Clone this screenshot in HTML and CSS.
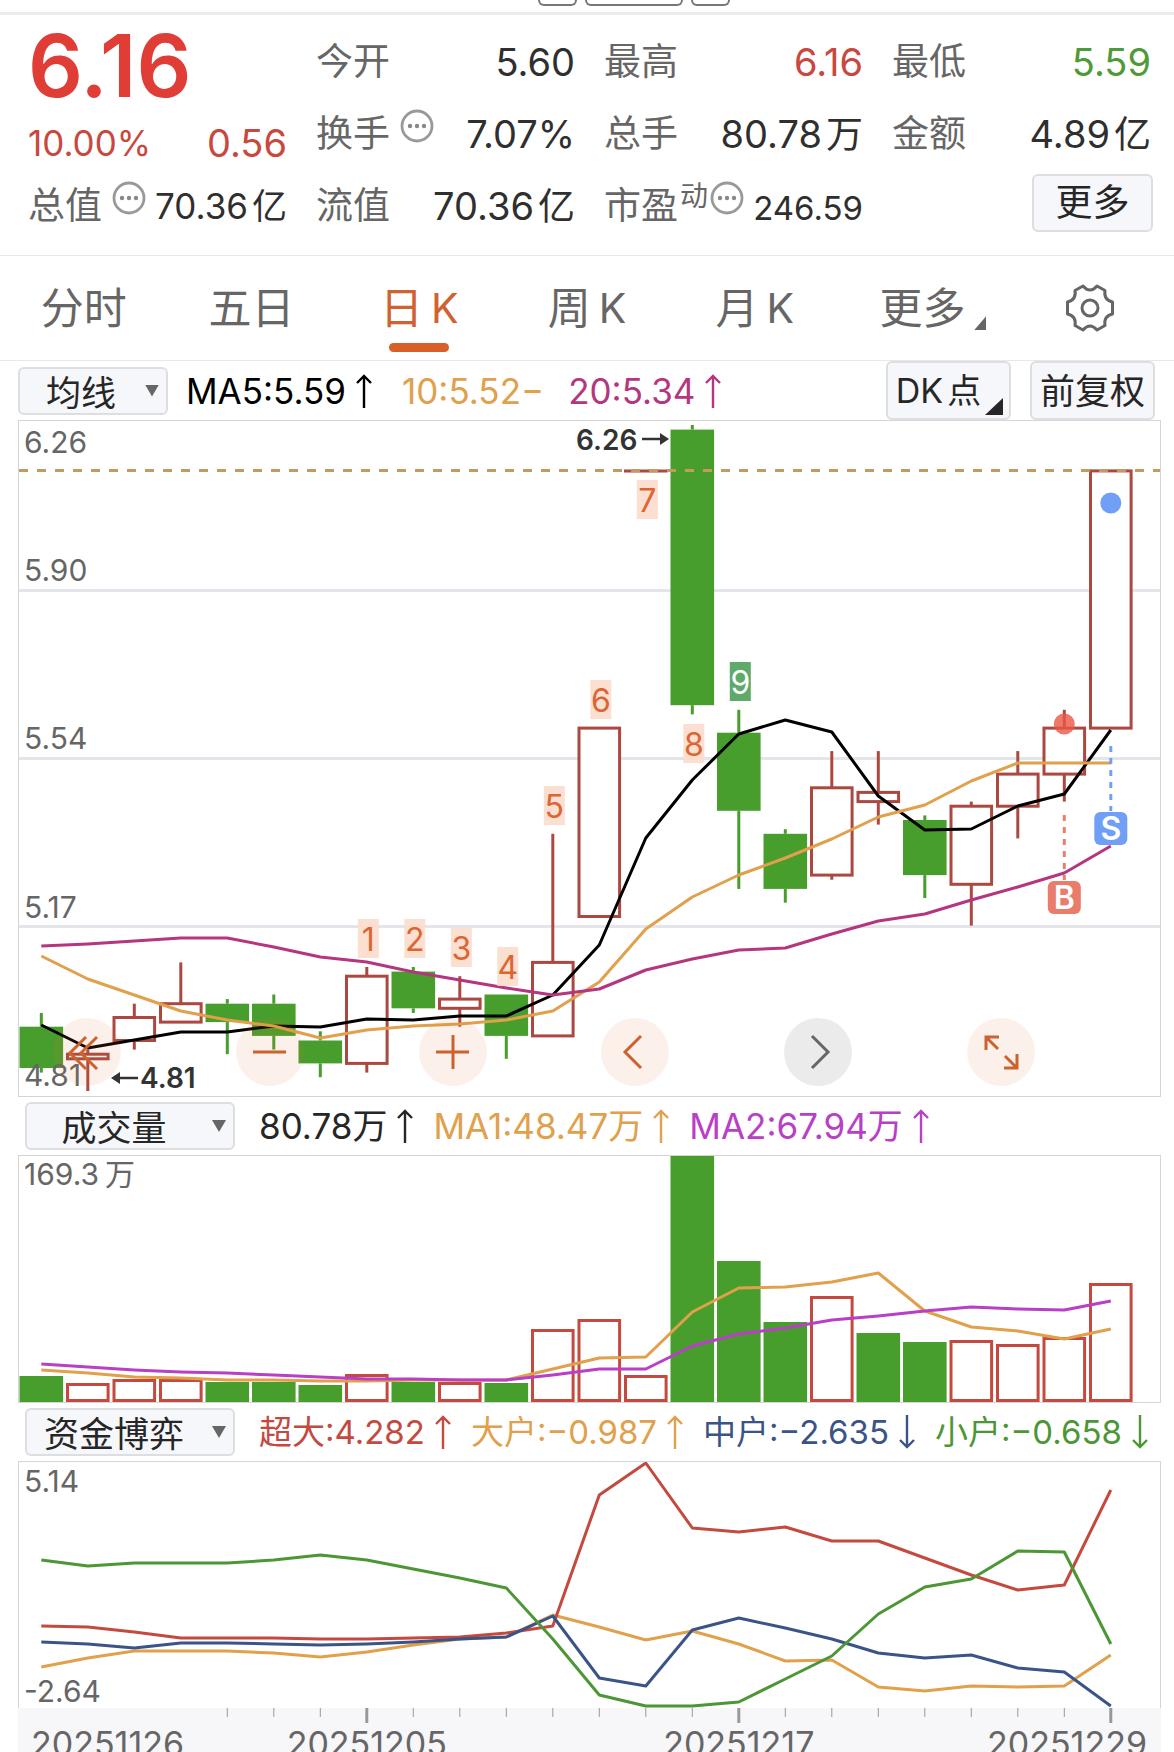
FILE: index.html
```html
<!DOCTYPE html>
<html lang="zh-CN">
<head>
<meta charset="utf-8">
<meta name="viewport" content="width=device-width, initial-scale=1">
<title>日K</title>
<link rel="stylesheet" href="styles.css">
</head>
<body>
<svg class="defs" aria-hidden="true">
  <symbol id="info" viewBox="0 0 34 34">
    <circle cx="17" cy="17" r="15" fill="none" stroke="#999" stroke-width="2.8"/>
    <g fill="#888"><circle cx="10" cy="17" r="2.2"/><circle cx="17" cy="17" r="2.2"/><circle cx="24" cy="17" r="2.2"/></g>
  </symbol>
  <symbol id="up" viewBox="0 0 16 34">
    <path d="M8 34V2M1 9l7-7 7 7" fill="none" stroke="currentColor" stroke-width="2.4"/>
  </symbol>
  <symbol id="down" viewBox="0 0 16 34">
    <path d="M8 0v32M1 25l7 7 7-7" fill="none" stroke="currentColor" stroke-width="2.4"/>
  </symbol>
</svg>

<div class="strip"><i class="pill pill-s"></i><i class="pill pill-l"></i><i class="pill pill-s"></i></div>

<section class="quote">
  <div class="cell first"><strong class="price">6.16</strong></div>
  <div class="cell"><span class="name">今开</span><span class="val">5.60</span></div>
  <div class="cell"><span class="name">最高</span><span class="val up">6.16</span></div>
  <div class="cell"><span class="name">最低</span><span class="val down">5.59</span></div>

  <div class="cell change"><span class="val mid up">10.00%</span><span class="val up">0.56</span></div>
  <div class="cell"><span class="name">换手<svg class="info"><use href="#info"/></svg></span><span class="val">7.07%</span></div>
  <div class="cell"><span class="name">总手</span><span class="val">80.78<span class="unit">万</span></span></div>
  <div class="cell"><span class="name">金额</span><span class="val">4.89<span class="unit">亿</span></span></div>

  <div class="cell"><span class="name">总值<svg class="info"><use href="#info"/></svg></span><span class="val mid">70.36<span class="unit">亿</span></span></div>
  <div class="cell"><span class="name">流值</span><span class="val">70.36<span class="unit">亿</span></span></div>
  <div class="cell"><span class="name">市盈<sup class="sup">动</sup><svg class="info tight"><use href="#info"/></svg></span><span class="val small">246.59</span></div>
  <div class="cell end"><button class="btn more" type="button">更多</button></div>
</section>

<nav class="tabs">
  <a class="tab" href="#">分时</a>
  <a class="tab" href="#">五日</a>
  <a class="tab active" href="#" aria-current="page">日<span class="k">K</span></a>
  <a class="tab" href="#">周<span class="k">K</span></a>
  <a class="tab" href="#">月<span class="k">K</span></a>
  <a class="tab drop" href="#">更多</a>
  <a class="tab" href="#" aria-label="设置">
    <svg class="gear" viewBox="-25 -25 50 50" fill="none" stroke="#666" stroke-width="3" stroke-linejoin="round">
      <path d="M-7 -22Q0 -14 7 -22L15 -17.5Q13.5 -8 22.5 -6V6Q13.5 8 15 17.5L7 22Q0 14 -7 22L-15 17.5Q-13.5 8 -22.5 6V-6Q-13.5 -8 -15 -17.5Z"/>
      <circle r="8"/>
    </svg>
  </a>
</nav>

<main class="charts">
  <div class="bar bar-main">
    <span class="pick pick-s"><select aria-label="主图指标"><option>均线</option></select></span>
    <span class="legend ma5">MA5:5.59<svg class="arrow"><use href="#up"/></svg></span>
    <span class="legend ma10">10:5.52−</span>
    <span class="legend ma20">20:5.34<svg class="arrow"><use href="#up"/></svg></span>
    <span class="tools">
      <button class="btn tool dk" type="button">DK<span class="unit">点</span></button>
      <button class="btn tool" type="button">前复权</button>
    </span>
  </div>
  <div class="panel">
    <svg id="kline" class="plot" viewBox="1 1 1141 675" role="img" aria-label="日K线"></svg>
    <div class="controls">
      <button class="round" type="button" aria-label="最早"><svg viewBox="-34 -34 68 68"><path d="M-1 -15L-17 1L-1 17M10 -15L-6 1L10 17"/></svg></button>
      <button class="round" type="button" aria-label="缩小"><svg viewBox="-34 -34 68 68"><path d="M-17 0H16"/></svg></button>
      <button class="round" type="button" aria-label="放大"><svg viewBox="-34 -34 68 68"><path d="M-17 0H16M0 -17V17"/></svg></button>
      <button class="round" type="button" aria-label="向左"><svg viewBox="-34 -34 68 68"><path d="M6 -16L-10 0L6 16"/></svg></button>
      <button class="round gray" type="button" aria-label="向右"><svg viewBox="-34 -34 68 68"><path d="M-6 -16L10 0L-6 16"/></svg></button>
      <button class="round" type="button" aria-label="全屏"><svg viewBox="-34 -34 68 68"><path d="M-15 -2V-15H-2M-15 -15L-3 -3M16 2V16H3M16 16L4 4"/></svg></button>
    </div>
  </div>

  <div class="bar">
    <span class="pick pick-l"><select aria-label="成交量指标"><option>成交量</option></select></span>
    <span class="legend vol">80.78万<svg class="arrow"><use href="#up"/></svg></span>
    <span class="legend vma1">MA1:48.47万<svg class="arrow"><use href="#up"/></svg></span>
    <span class="legend vma2">MA2:67.94万<svg class="arrow"><use href="#up"/></svg></span>
  </div>
  <div class="panel">
    <svg id="volume" class="plot" viewBox="1 1 1141 246" role="img" aria-label="成交量"></svg>
  </div>

  <div class="bar bar-flow">
    <span class="pick pick-l"><select aria-label="资金指标"><option>资金博弈</option></select></span>
    <span class="legend xl">超大:4.282<svg class="arrow"><use href="#up"/></svg></span>
    <span class="legend lg">大户:−0.987<svg class="arrow"><use href="#up"/></svg></span>
    <span class="legend md">中户:−2.635<svg class="arrow"><use href="#down"/></svg></span>
    <span class="legend sm">小户:−0.658<svg class="arrow"><use href="#down"/></svg></span>
  </div>
  <div class="panel open">
    <svg id="flow" class="plot" viewBox="1 1 1141 246" role="img" aria-label="资金博弈"></svg>
  </div>
  <div class="axis">
    <svg id="dates" class="plot" viewBox="0 0 1143 44" role="img" aria-label="日期"></svg>
  </div>
</main>
<script src="chart.js"></script>
</body>
</html>
```
FILE: styles.css
```css
* { box-sizing: border-box; }

body {
  margin: 0;
  background: #fff;
  color: #2f2f2f;
  font-family: Inter, "Noto Sans CJK SC", sans-serif;
  font-size: 37px;
  line-height: 48px;
}

button, select { font: inherit; color: inherit; }
a { color: inherit; text-decoration: none; }
.defs { position: absolute; width: 0; height: 0; }

/* toolbar remainder above the quote */
.strip {
  display: flex;
  justify-content: center;
  gap: 8px;
  height: 15px;
  padding-left: 94px;
  border-bottom: 3px solid #ececec;
}
.pill { height: 6px; border: 2px solid #777; border-top: 0; border-radius: 0 0 8px 8px; }
.pill-s { width: 39px; }
.pill-l { width: 98px; }

/* quote */
.quote {
  display: grid;
  grid-template-columns: repeat(4, 1fr);
  grid-auto-rows: 72px;
  column-gap: 29px;
  padding: 11px 23px 13px 28px;
  border-bottom: 1px solid #e8e8e8;
}
.cell { display: flex; align-items: center; justify-content: space-between; white-space: nowrap; }
.cell.first { padding-top: 8px; }
.cell.change { padding-top: 18px; }
.cell.end { justify-content: flex-end; }
.name { display: flex; align-items: center; color: #666; }
.val { font-size: 38px; }
.val .unit { font-size: 37px; margin-left: 4px; }
.val.mid { font-size: 35px; }
.val.mid .unit { font-size: 35px; }
.val.small { font-size: 33px; padding-top: 4px; }
.up { color: #c84840; }
.down { color: #4f9a38; }
.price { font-size: 86px; font-weight: 600; color: #df3d35; }
.unit { margin-left: 6px; }
.info { width: 34px; height: 34px; margin: 0 0 16px 10px; }
.info.tight { margin-left: 2px; }
.sup { font-size: 28px; line-height: 28px; margin: 0 0 20px 2px; }

.btn {
  border: 2px solid #dcdee2;
  border-radius: 6px;
  background: #f6f7fa;
  color: #262626;
  padding: 0;
}
.more { width: 121px; height: 58px; margin: -6px -2px 0 0; }

/* period tabs */
.tabs { display: flex; height: 105px; border-bottom: 1px solid #e8e8e8; }
.tab {
  position: relative;
  flex: 1;
  display: flex;
  align-items: center;
  justify-content: center;
  font-size: 43px;
  color: #666;
}
.k { margin-left: 8px; font-size: 41px; }
.active { color: #d0622f; }
.active::after {
  content: "";
  position: absolute;
  bottom: 8px;
  width: 60px;
  height: 9px;
  border-radius: 5px;
  background: #d95f28;
}
.drop::after {
  content: "";
  position: absolute;
  right: 20px;
  bottom: 30px;
  width: 12px;
  height: 14px;
  background: #666;
  clip-path: polygon(100% 0, 100% 100%, 0 100%);
}
.gear { width: 50px; height: 50px; }

/* charts */
.charts { padding: 0 13px 0 18px; }
.bar { display: flex; align-items: center; height: 58px; padding-left: 7px; white-space: nowrap; font-size: 35px; }
.bar-main { height: 59px; padding: 0 6px 0 0; }
.bar-flow { font-size: 33px; }

.pick { position: relative; height: 48px; font-size: 35px; color: #262626; }
.pick select {
  appearance: none;
  width: 100%;
  height: 48px;
  padding: 0 32px 0 0;
  border: 2px solid #dcdee2;
  border-radius: 6px;
  background: #f6f7fa;
  text-align: center;
  text-align-last: center;
}
.pick::after {
  content: "";
  position: absolute;
  top: 18px;
  right: 9px;
  width: 14px;
  height: 12px;
  background: #666;
  clip-path: polygon(0 0, 100% 0, 50% 100%);
}
.pick-s { width: 150px; }
.pick-s select { padding-right: 24px; }
.pick-l { width: 210px; }

.legend { display: flex; align-items: center; margin-left: 20px; }
.pick-l + .legend { margin-left: 24px; }
.pick-s + .legend { margin-left: 18px; }
.bar-main .legend + .legend { margin-left: 30px; }
.bar-main .ma10 + .legend { margin-left: 24px; }
.arrow { width: 16px; height: 34px; margin-left: 10px; }
.ma5 { color: #000; }
.ma10, .vma1, .lg { color: #e0a04c; }
.ma20 { color: #b5357f; }
.vol { color: #262626; }
.vma2 { color: #b83fc6; }
.xl { color: #c44a3f; }
.md { color: #3b5488; }
.sm { color: #4c9636; }

.tools { display: flex; gap: 19px; margin-left: auto; }
.tool { position: relative; width: 125px; height: 59px; font-size: 35px; }
.dk { padding-right: 20px; font-size: 34px; }
.dk .unit { margin-left: 4px; }
.dk::after {
  content: "";
  position: absolute;
  right: 6px;
  bottom: 3px;
  width: 18px;
  height: 17px;
  background: #262626;
  clip-path: polygon(100% 0, 100% 100%, 0 100%);
}

.panel { position: relative; border: 1px solid #d5d5d5; }
.panel.open { border-bottom: 0; }
.plot { display: block; width: 100%; height: auto; }
.axis { background: #f7f7fa; overflow: hidden; }

.controls {
  position: absolute;
  left: 3%;
  right: 11%;
  bottom: 10px;
  display: flex;
  justify-content: space-between;
}
.round {
  width: 68px;
  height: 68px;
  padding: 0;
  border: 0;
  border-radius: 50%;
  background: rgba(230, 120, 50, .1);
}
.round svg { display: block; fill: none; stroke: #cc632f; stroke-width: 3; }
.round.gray { background: #ebebeb; }
.round.gray svg { stroke: #666; }

/* plot parts */
.plot text { font-family: Inter, "Noto Sans CJK SC", sans-serif; font-size: 30px; fill: #666; }
.grid { stroke: #e3e5ea; stroke-width: 3; }
.last { stroke: #c49a63; stroke-width: 3; stroke-dasharray: 9 9; }
.fall { fill: #489e2c; stroke: none; }
.rise { fill: #fff; stroke: #ab4840; stroke-width: 3; }
.rise.v { stroke: #c44a3f; }
.wick-fall { stroke: #489e2c; stroke-width: 3; }
.wick-rise { stroke: #ab4840; stroke-width: 3; }
.line { fill: none; stroke-width: 3; stroke-linejoin: round; }
.plot .mark { font-size: 28px; font-weight: 600; fill: #333; }
.mark-line { stroke: #333; stroke-width: 2.5; }
.mark-head { fill: #333; }
.td { fill: #fbdccb; fill-opacity: .9; }
.td.nine { fill: #5fa96b; fill-opacity: 1; }
.plot .td-n { font-size: 32px; fill: #dd6534; text-anchor: middle; }
.plot .td-n.nine { fill: #fff; }
.plot .bs { font-size: 32px; font-weight: 600; fill: #fff; text-anchor: middle; }
.tick { stroke: #999; stroke-width: 1; }
.tick.major { stroke-width: 3; }
.plot .date { font-size: 34px; }
```
FILE: chart.js
```js
const NS = 'http://www.w3.org/2000/svg';
const STEP = 46.5, FIRST = 23.3, BODY = 43.6;
const cx = i => FIRST + STEP * i;

function add(svg, tag, attrs, text) {
  const el = document.createElementNS(NS, tag);
  for (const k in attrs) el.setAttribute(k, attrs[k]);
  if (text !== undefined) el.textContent = text;
  svg.appendChild(el);
}
function line(svg, ys, color) {
  add(svg, 'polyline', {
    class: 'line', stroke: color,
    points: ys.map((y, i) => cx(i).toFixed(1) + ',' + y).join(' ')
  });
}
function seg(svg, cls, x1, y1, x2, y2, extra) {
  add(svg, 'line', Object.assign({ class: cls, x1, y1, x2, y2 }, extra));
}

/* open, high, low, close */
const days = [
  [4.95, 4.98, 4.85, 4.86], [4.88, 4.90, 4.81, 4.89], [4.92, 5.00, 4.90, 4.97],
  [4.96, 5.09, 4.96, 5.00], [5.00, 5.01, 4.89, 4.96], [5.00, 5.02, 4.90, 4.93],
  [4.92, 4.94, 4.84, 4.87], [4.87, 5.08, 4.85, 5.06], [5.07, 5.08, 4.98, 4.99],
  [4.99, 5.06, 4.95, 5.01], [5.02, 5.02, 4.88, 4.93], [4.93, 5.37, 4.93, 5.09],
  [5.19, 5.60, 5.19, 5.60], [6.16, 6.16, 6.16, 6.16], [6.25, 6.26, 5.63, 5.65],
  [5.59, 5.64, 5.25, 5.42], [5.37, 5.38, 5.22, 5.25], [5.28, 5.55, 5.27, 5.47],
  [5.44, 5.55, 5.39, 5.46], [5.40, 5.41, 5.23, 5.28], [5.26, 5.44, 5.17, 5.43],
  [5.43, 5.55, 5.36, 5.50], [5.50, 5.64, 5.44, 5.60], [5.60, 6.16, 5.60, 6.16]
];

const k = document.getElementById('kline');
const py = p => +(5 + (6.26 - p) * 459.3).toFixed(1);
[170, 338, 506].forEach(y => seg(k, 'grid', 1, y + .5, 1142, y + .5));
[['6.26', 33], ['5.90', 161], ['5.54', 329], ['5.17', 498]].forEach(([t, y]) => add(k, 'text', { x: 6, y }, t));

days.forEach(([o, h, l, c], i) => {
  const rise = c >= o, x = cx(i), top = py(Math.max(o, c)), bot = py(Math.min(o, c));
  const wick = rise ? 'wick-rise' : 'wick-fall';
  if (h > Math.max(o, c)) seg(k, wick, x, py(h), x, top);
  if (l < Math.min(o, c)) seg(k, wick, x, bot, x, py(l));
  if (o === c) seg(k, wick, x - BODY / 2, top, x + BODY / 2, top);
  else if (rise) add(k, 'rect', { class: 'rise', x: x - BODY / 2 + 1.5, y: top, width: BODY - 3, height: bot - top });
  else add(k, 'rect', { class: 'fall', x: x - BODY / 2, y: top, width: BODY, height: bot - top });
});
add(k, 'text', { x: 6, y: 666 }, '4.81');
seg(k, 'last', 1, 50.5, 1142, 50.5);

line(k, [605,628,620,612,612,606,607,599,600,596,596,575,525,418,360,314,300,312,376,410,409,386,374,310], '#000');
line(k, [536,559,575,591,600,606,618,610,606,604,600,591,562,509,477,455,438,419,397,385,361,343,343,343], '#e0a04c');
line(k, [526,524,521,518,518,527,537,542,552,560,568,575,569,550,539,530,528,514,501,494,480,467,453,426], '#b5357f');

/* sequence counters above and below the candles */
[499, 499, 508, 527, 366, 260, 60, 304, 242].forEach((y, n) => {
  const nine = n === 8 ? ' nine' : '', x = cx(n + 7) + 1.5;
  add(k, 'rect', { class: 'td' + nine, x: x - 10.5, y, width: 21, height: 39 });
  add(k, 'text', { class: 'td-n' + nine, x, y: y + 32 }, n + 1);
});

add(k, 'text', { class: 'mark', x: 558, y: 30 }, '6.26');
seg(k, 'mark-line', 624, 19, 643, 19);
add(k, 'path', { class: 'mark-head', d: 'M642 13l9 6-9 6z' });
add(k, 'text', { class: 'mark', x: 122, y: 668 }, '4.81');
seg(k, 'mark-line', 100, 658, 120, 658);
add(k, 'path', { class: 'mark-head', d: 'M102 652l-9 6 9 6z' });

/* buy and sell points */
add(k, 'circle', { cx: cx(23), cy: 83, r: 10.5, fill: '#709ff5' });
add(k, 'circle', { cx: cx(22), cy: 304, r: 10.5, fill: '#ea5745', 'fill-opacity': .8 });
seg(k, '', cx(23), 326, cx(23), 391, { stroke: '#709ff5', 'stroke-width': 3, 'stroke-dasharray': '6 6' });
seg(k, '', cx(22), 395, cx(22), 460, { stroke: '#e97f6f', 'stroke-width': 3, 'stroke-dasharray': '6 6' });
add(k, 'rect', { x: cx(23) - 16.5, y: 392, width: 33, height: 33, rx: 6, fill: '#709ff5' });
add(k, 'text', { class: 'bs', x: cx(23), y: 420 }, 'S');
add(k, 'rect', { x: cx(22) - 16.5, y: 461, width: 33, height: 33, rx: 6, fill: '#ea7c6c' });
add(k, 'text', { class: 'bs', x: cx(22), y: 489 }, 'B');

/* volume, coloured by the change from the previous close */
const v = document.getElementById('volume');
[26,19,23,23,20,20,17,28,20,20,19,73,83,27,247,141,80,106,69,60,62,58,65,119].forEach((h, i) => {
  const x = cx(i), prev = i ? days[i - 1][3] : days[0][0];
  if (days[i][3] >= prev) add(v, 'rect', { class: 'rise v', x: x - BODY / 2 + 1.5, y: 247 - h + 1.5, width: BODY - 3, height: h - 3 });
  else add(v, 'rect', { class: 'fall', x: x - BODY / 2, y: 247 - h, width: BODY, height: h });
});
line(v, [215,218,222,223,225,225,226,226,225,225,225,214,203,202,157,133,132,127,118,156,172,176,184,174], '#e0a04c');
line(v, [209,212,215,217,218,220,222,224,224,225,225,220,214,214,191,179,173,165,161,156,152,154,155,146], '#b83fc6');
add(v, 'text', { x: 6, y: 30 }, '169.3');
add(v, 'text', { x: 87, y: 30 }, '万');

/* money flow */
const f = document.getElementById('flow');
line(f, [206,197,190,190,190,192,196,191,184,178,176,154,166,179,170,183,200,199,226,230,225,226,225,194], '#e0a04c');
line(f, [165,166,171,177,177,177,178,178,177,176,172,165,34,2,67,71,66,80,80,97,114,129,124,29], '#c44a3f');
line(f, [181,183,187,182,182,183,184,183,181,178,176,155,217,225,169,157,167,178,192,197,194,207,211,245], '#3b5488');
line(f, [99,105,102,102,102,99,94,99,108,117,127,178,234,245,245,241,218,195,153,126,118,90,91,183], '#4c9636');
add(f, 'text', { x: 6, y: 31 }, '5.14');
add(f, 'text', { x: 6, y: 241 }, '-2.64');

/* dates */
const d = document.getElementById('dates');
for (let i = 4; i < days.length; i++) {
  const major = i % 8 === 7;
  seg(d, major ? 'tick major' : 'tick', cx(i), 0, cx(i), major ? 15 : 9);
}
[['20251126', 13, 'start'], ['20251205', cx(7), 'middle'], ['20251217', cx(15), 'middle'], ['20251229', 1129, 'end']]
  .forEach(([t, x, a]) => add(d, 'text', { class: 'date', x, y: 48, 'text-anchor': a }, t));
```
